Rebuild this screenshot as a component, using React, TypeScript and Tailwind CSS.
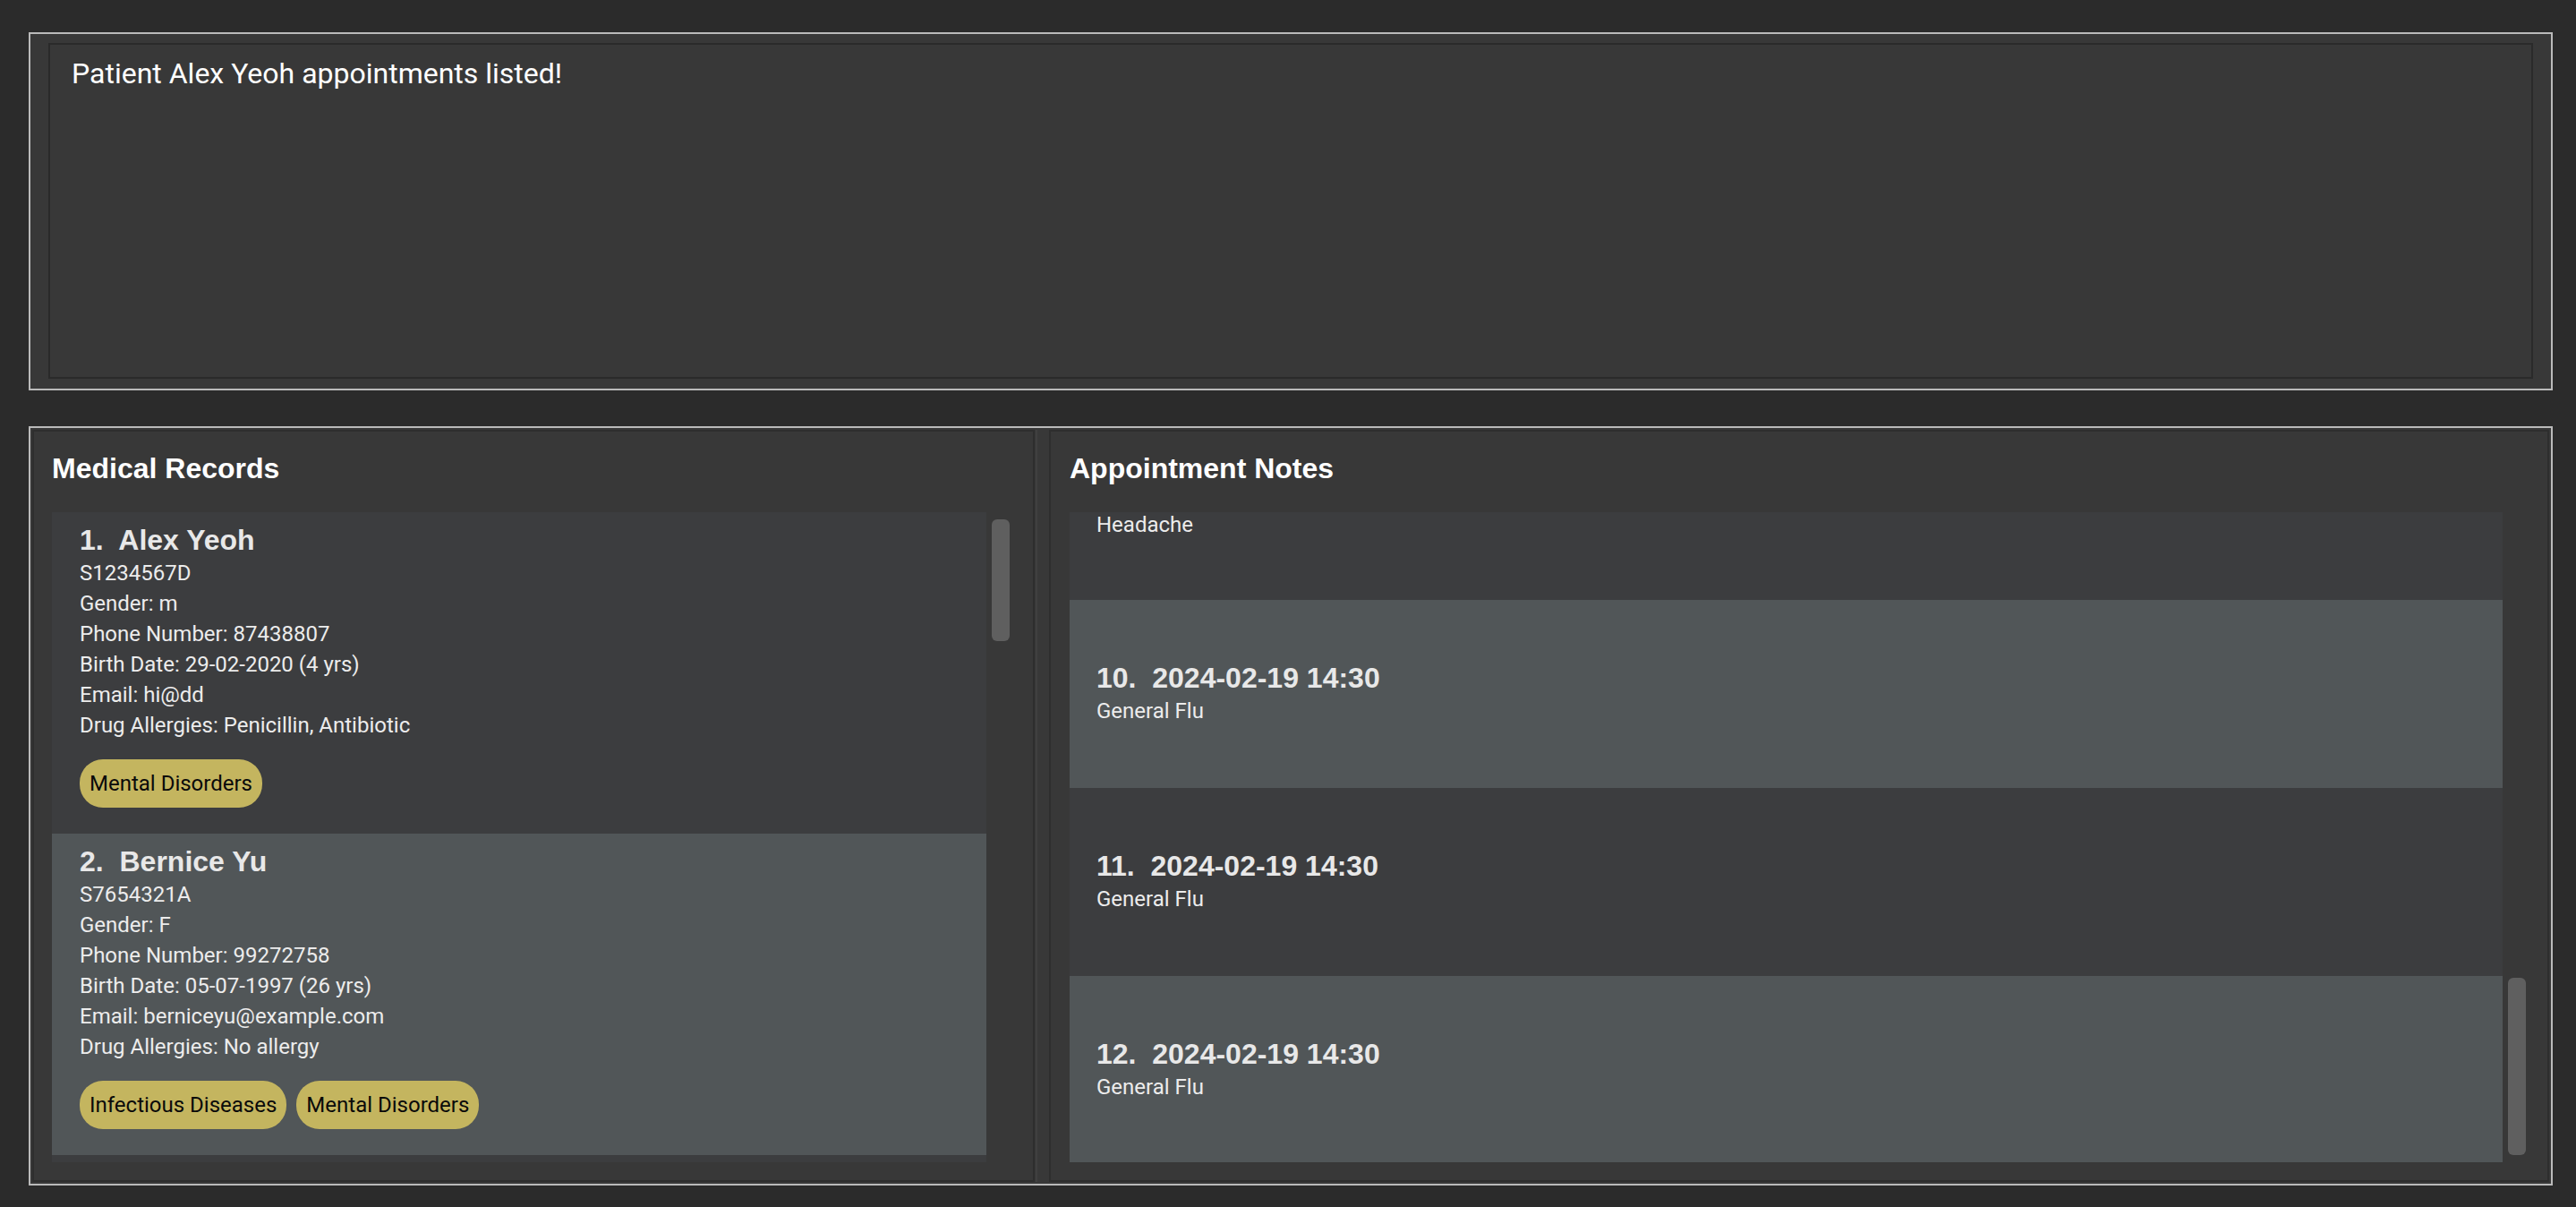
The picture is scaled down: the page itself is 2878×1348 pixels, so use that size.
import React from "react";

const bold = "font-['Liberation_Sans',Arial,sans-serif] font-bold";
const reg = "font-['Roboto','Noto_Sans',sans-serif]";

type Patient = {
  idx: number;
  name: string;
  nric: string;
  gender: string;
  phone: string;
  birth: string;
  email: string;
  allergies: string;
  tags: string[];
};

const patients: Patient[] = [
  {
    idx: 1,
    name: "Alex Yeoh",
    nric: "S1234567D",
    gender: "m",
    phone: "87438807",
    birth: "29-02-2020 (4 yrs)",
    email: "hi@dd",
    allergies: "Penicillin, Antibiotic",
    tags: ["Mental Disorders"],
  },
  {
    idx: 2,
    name: "Bernice Yu",
    nric: "S7654321A",
    gender: "F",
    phone: "99272758",
    birth: "05-07-1997 (26 yrs)",
    email: "berniceyu@example.com",
    allergies: "No allergy",
    tags: ["Infectious Diseases", "Mental Disorders"],
  },
];

const appts = [
  { idx: 10, when: "2024-02-19 14:30", note: "General Flu" },
  { idx: 11, when: "2024-02-19 14:30", note: "General Flu" },
  { idx: 12, when: "2024-02-19 14:30", note: "General Flu" },
];

function PatientCard({ p, dark }: { p: Patient; dark: boolean }) {
  return (
    <div
      className={`${dark ? "bg-[#3c3d3f]" : "bg-[#515658]"} shrink-0 pl-[31px] pr-4 pt-[13px] pb-[29px] flex flex-col`}
    >
      <div className={`${bold} text-[32px] leading-[36px] text-[#e8e8e8] whitespace-pre`}>
        {`${p.idx}.  ${p.name}`}
      </div>
      <div className={`${reg} text-[24px] leading-[34px] text-[#ececec] mt-[2px] flex flex-col`}>
        <div>{p.nric}</div>
        <div>Gender: {p.gender}</div>
        <div>Phone Number: {p.phone}</div>
        <div>Birth Date: {p.birth}</div>
        <div>Email: {p.email}</div>
        <div>Drug Allergies: {p.allergies}</div>
      </div>
      <div className="flex gap-[11px] mt-[21px]">
        {p.tags.map((t) => (
          <div
            key={t}
            className={`${reg} h-[54px] px-[11px] rounded-[26px] bg-[#c4b55f] text-[#0a0a0a] text-[24px] flex items-center`}
          >
            {t}
          </div>
        ))}
      </div>
    </div>
  );
}

function ApptCard({ a, dark }: { a: (typeof appts)[number]; dark: boolean }) {
  return (
    <div
      className={`${dark ? "bg-[#3c3d3f]" : "bg-[#515658]"} h-[210px] shrink-0 pl-[30px] flex flex-col justify-center`}
    >
      <div className={`${bold} text-[32px] leading-[36px] text-[#e8e8e8] whitespace-pre`}>
        {`${a.idx}.  ${a.when}`}
      </div>
      <div className={`${reg} text-[24px] leading-[34px] text-[#ececec] mt-[2px]`}>{a.note}</div>
    </div>
  );
}

export default function App() {
  return (
    <div className="w-[2878px] h-[1348px] bg-[#2b2b2b] pt-[36px] pl-[32px] pr-[26px] pb-[24px] flex flex-col gap-[40px] overflow-hidden">
      {/* Result display */}
      <div className="h-[400px] shrink-0 border-2 border-[#bababa] bg-[#383838] px-[20px] pt-[10px] pb-[11px] flex">
        <div className="flex-1 border-2 border-[#2a2a2a] bg-[#383838] pl-[24px] pt-[13px]">
          <div className={`${reg} text-[32px] leading-[38px] text-white`}>
            Patient Alex Yeoh appointments listed!
          </div>
        </div>
      </div>

      {/* Lists */}
      <div className="flex-1 min-h-0 border-2 border-[#bababa] bg-[#383838] p-[2px] flex">
        {/* Left panel */}
        <div className="w-[1120px] shrink-0 border-2 border-[#2e2e2e] bg-[#383838] flex flex-col pl-[20px] pt-[23px] pb-[20px]">
          <div className={`${bold} text-[32px] leading-[36px] text-white`}>Medical Records</div>
          <div className="flex-1 min-h-0 mt-[31px] flex">
            <div className="w-[1044px] overflow-hidden flex flex-col">
              {patients.map((p, i) => (
                <PatientCard key={p.idx} p={p} dark={i % 2 === 0} />
              ))}
              <div className="flex-1 bg-[#3c3d3f]" />
            </div>
            <div className="w-[20px] ml-[6px] pt-[8px]">
              <div className="h-[136px] rounded-[6px] bg-[#5f5f5f]" />
            </div>
          </div>
        </div>

        {/* Divider */}
        <div className="w-[16px] shrink-0 bg-[#383838] flex">
          <div className="w-[2px] bg-[#404040] ml-[1px]" />
        </div>

        {/* Right panel */}
        <div className="flex-1 border-2 border-[#2e2e2e] bg-[#383838] flex flex-col pl-[21px] pt-[23px] pb-[20px]">
          <div className={`${bold} text-[32px] leading-[36px] text-white`}>Appointment Notes</div>
          <div className="flex-1 min-h-0 mt-[31px] flex">
            <div className="w-[1601px] overflow-hidden flex flex-col">
              <div className="h-[98px] shrink-0 bg-[#3c3d3f] pl-[30px]">
                <div className={`${reg} text-[24px] leading-[28px] text-[#ececec]`}>Headache</div>
              </div>
              {appts.map((a, i) => (
                <ApptCard key={a.idx} a={a} dark={i % 2 === 1} />
              ))}
            </div>
            <div className="w-[20px] ml-[6px] flex flex-col justify-end pb-[8px]">
              <div className="h-[198px] rounded-[6px] bg-[#5f5f5f]" />
            </div>
          </div>
        </div>
      </div>
    </div>
  );
}
